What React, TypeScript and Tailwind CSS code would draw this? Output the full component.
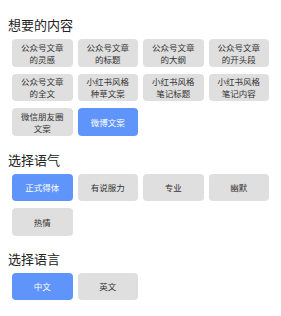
import * as React from "react";

type Option = { label: string; selected?: boolean };

const contentOptions: Option[] = [
  { label: "公众号文章的灵感" },
  { label: "公众号文章的标题" },
  { label: "公众号文章的大纲" },
  { label: "公众号文章的开头段" },
  { label: "公众号文章的全文" },
  { label: "小红书风格种草文案" },
  { label: "小红书风格笔记标题" },
  { label: "小红书风格笔记内容" },
  { label: "微信朋友圈文案" },
  { label: "微博文案", selected: true },
];

const toneOptions: Option[] = [
  { label: "正式得体", selected: true },
  { label: "有说服力" },
  { label: "专业" },
  { label: "幽默" },
  { label: "热情" },
];

const langOptions: Option[] = [{ label: "中文", selected: true }, { label: "英文" }];

const Chip = ({ label, selected }: Option) => (
  <button
    className={
      selected
        ? "h-[27.5px] rounded-[4px] bg-[#5f95fb] px-2 text-[8.5px] leading-[12px] text-white"
        : "h-[27.5px] rounded-[4px] bg-[#dfdfdf] px-2 text-[8.5px] leading-[12px] text-[#333333]"
    }
  >
    {label}
  </button>
);

const Section = ({
  title,
  options,
  className,
}: {
  title: string;
  options: Option[];
  className?: string;
}) => (
  <section className={className}>
    <h2 className="px-2 text-[13px] leading-[18px] text-[#222222]">{title}</h2>
    <div className="mt-[5px] grid grid-cols-4 gap-x-[5px] gap-y-[7px] px-3">
      {options.map((o) => (
        <Chip key={o.label} {...o} />
      ))}
    </div>
  </section>
);

export default function App() {
  return (
    <div className="min-h-[316px] w-[281px] bg-white pt-4 font-['Noto_Sans_CJK_SC','Noto_Sans',sans-serif]">
      <Section title="想要的内容" options={contentOptions} />
      <Section title="选择语气" options={toneOptions} className="mt-[15px]" />
      <Section title="选择语言" options={langOptions} className="mt-[14px]" />
    </div>
  );
}
